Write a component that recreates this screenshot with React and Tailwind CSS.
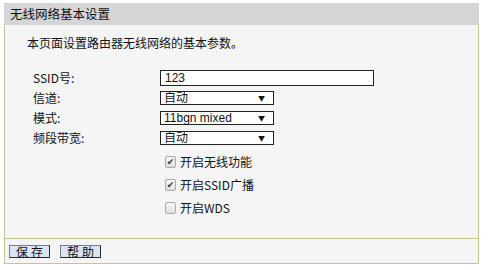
import React from 'react';

const font = { fontFamily: '"Noto Sans CJK SC", "DejaVu Sans", sans-serif' };
const latin = { fontFamily: '"Liberation Sans", "Noto Sans CJK SC", sans-serif' };

const Select = ({ value }) => (
  <div className="w-[114px] h-[14px] border border-[#222] bg-white flex items-center justify-between pl-[3px] pr-[8px] text-[12px] leading-none text-[#111]">
    <span style={latin}>{value}</span>
    <span className="text-[7px]">▼</span>
  </div>
);

const Row = ({ label, children }) => (
  <div className="flex items-center h-[20px]">
    <div className="w-[127px] text-[12px] leading-none text-[#111]">{label}</div>
    {children}
  </div>
);

const Check = ({ checked, label }) => (
  <div className="flex items-center h-[23px] gap-[4px]">
    <div className="w-[11px] h-[12px] border border-[#a9a9a9] rounded-[2px] bg-gradient-to-b from-[#f8f8f8] to-[#dedede] flex items-center justify-center text-[9px] leading-none text-[#333]">
      {checked ? '✔' : ''}
    </div>
    <span className="text-[12px] leading-none text-[#111]">{label}</span>
  </div>
);

const Btn = ({ children }) => (
  <button className="h-[13px] w-[41px] border border-[#2b2b2b] border-t-[#6f7f90] border-l-[#6f7f90] bg-[#d9e6f2] text-[12px] leading-none text-[#111] tracking-[3px] pl-[3px] flex items-center justify-center">
    {children}
  </button>
);

export default function App() {
  return (
    <div className="w-[491px] h-[270px] bg-white pt-[3px] pl-[4px]" style={font}>
      <div className="w-[475px]">
        <div className="h-[22px] bg-[#d5d5d5] flex items-center pl-[6px] text-[12.5px] text-[#111]">
          无线网络基本设置
        </div>
        <div className="h-[213px] bg-[#f5f5f5] border-l border-r border-[#cdbf93] pt-[11px]">
          <div className="pl-[22px] text-[12px] leading-[14px] text-[#111] h-[24px]">
            本页面设置路由器无线网络的基本参数。
          </div>
          <div className="pl-[28px] pt-[8px]">
            <Row label="SSID号:">
              <div className="w-[214px] h-[16px] border border-[#222] bg-white pl-[4px] text-[12px] leading-[14px] text-[#111]" style={latin}>123</div>
            </Row>
            <Row label="信道:"><Select value="自动" /></Row>
            <Row label="模式:"><Select value="11bgn mixed" /></Row>
            <Row label="频段带宽:"><Select value="自动" /></Row>
          </div>
          <div className="pl-[160px] pt-[2px]">
            <Check checked label="开启无线功能" />
            <Check checked label="开启SSID广播" />
            <Check label="开启WDS" />
          </div>
        </div>
        <div className="h-[26px] bg-[#f5f5f5] border border-[#cdbf93] flex items-center gap-[10px] pl-[4px] pt-[1px]">
          <Btn>保存</Btn>
          <Btn>帮助</Btn>
        </div>
      </div>
    </div>
  );
}
